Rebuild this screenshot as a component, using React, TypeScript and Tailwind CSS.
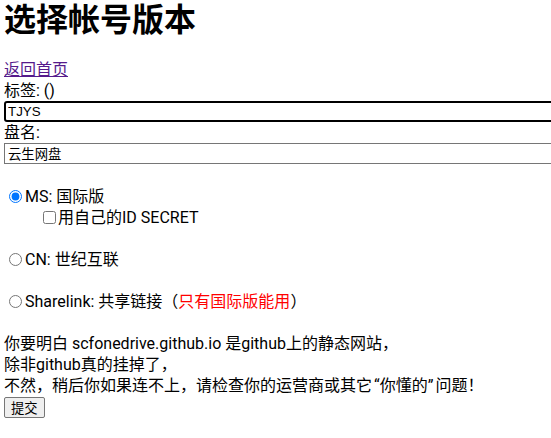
import React from "react";

export default function App() {
  const font = { fontFamily: 'Roboto, "Noto Sans CJK SC", sans-serif' };
  return (
    <div
      className="w-[551px] h-[438px] overflow-hidden bg-white text-black text-[16px] leading-[21px] px-[4px] [text-autospace:no-autospace]"
      style={font}
    >
      <h1 className="text-[32px] leading-[40px] font-bold mb-[19px] whitespace-nowrap">
        选择帐号版本
      </h1>
      <div>
        <a href="#" className="text-[#551a8b] underline">
          返回首页
        </a>
      </div>
      <div>标签: ()</div>
      <input
        readOnly
        value="TJYS"
        className="block w-[560px] h-[21px] border-2 border-black rounded-[3px] px-[2px] text-[13.333px] leading-[17px] text-black outline-none"
        style={{ fontFamily: '"Liberation Sans", "Noto Sans CJK SC", sans-serif' }}
      />
      <div>盘名:</div>
      <input
        readOnly
        value="云生网盘"
        className="block w-[560px] h-[21px] border border-[#767676] px-[3px] text-[13.333px] leading-[19px] text-black outline-none"
        style={{ fontFamily: '"Liberation Sans", "Noto Sans CJK SC", sans-serif' }}
      />
      <div className="h-[22px]" />
      <label className="flex items-center h-[21px] whitespace-nowrap">
        <input type="radio" name="v" defaultChecked className="w-[13px] h-[13px] ml-[5px] mr-[3px]" />
        MS: 国际版
      </label>
      <label className="flex items-center h-[21px] pl-[34px] whitespace-nowrap">
        <input type="checkbox" className="w-[13px] h-[13px] ml-[5px] mr-[2px]" />
        用自己的ID SECRET
      </label>
      <div className="h-[21px]" />
      <label className="flex items-center h-[21px] whitespace-nowrap">
        <input type="radio" name="v" className="w-[13px] h-[13px] ml-[5px] mr-[3px]" />
        CN: 世纪互联
      </label>
      <div className="h-[21px]" />
      <label className="flex items-center h-[21px] whitespace-nowrap">
        <input type="radio" name="v" className="w-[13px] h-[13px] ml-[5px] mr-[3px]" />
        <span>
          Sharelink: 共享链接（<span className="text-[#ff0000]">只有国际版能用</span>）
        </span>
      </label>
      <div className="h-[21px]" />
      <div className="whitespace-nowrap">你要明白 scfonedrive.github.io 是github上的静态网站，</div>
      <div className="whitespace-nowrap">除非github真的挂掉了，</div>
      <div className="whitespace-nowrap">
        不然，稍后你如果连不上，请检查你的运营商或其它
        <span className="ml-[2px]">“</span>你懂的<span className="mr-[2px]">”</span>
        问题！
      </div>
      <button
        className="block mt-[1px] h-[21px] px-[6px] border border-[#767676] rounded-[2px] bg-[#efefef] text-[13.333px] leading-[17px]"
        style={{ fontFamily: '"Noto Sans CJK SC", sans-serif' }}
      >
        提交
      </button>
    </div>
  );
}
